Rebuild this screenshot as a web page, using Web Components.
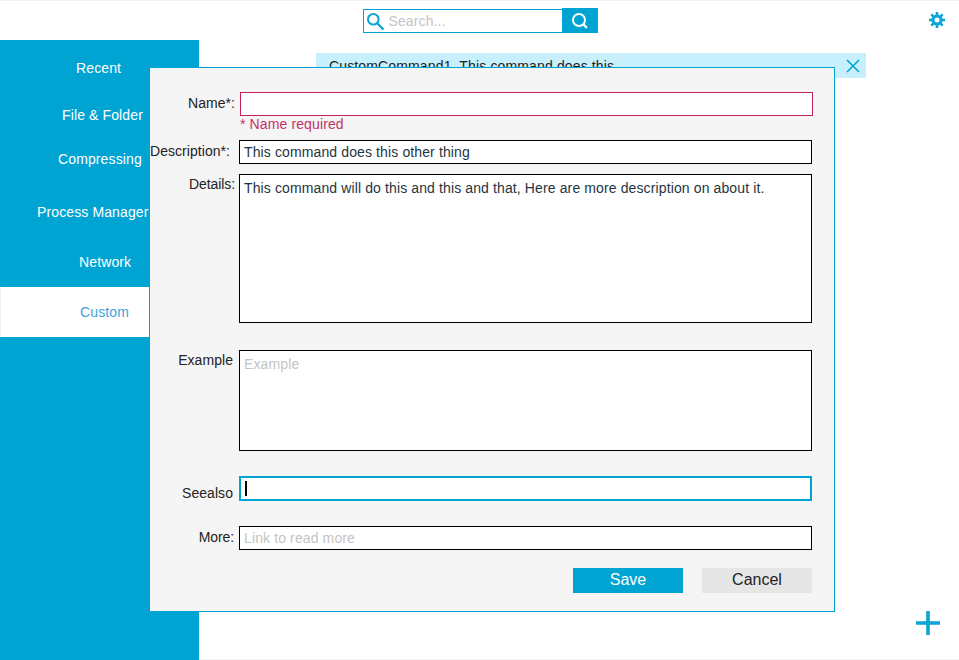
<!DOCTYPE html>
<html lang="en"><head><meta charset="utf-8"><title>Commands</title>
<style>
html,body{margin:0;padding:0;background:#fff;height:100%}
body{font:14px "Liberation Sans",Arial,sans-serif;color:#222;overflow:hidden}
</style></head><body>
<app-shell>
  <search-box slot="top"></search-box>
  <side-nav slot="nav">
    <nav-item style="--h:56px;--x:76px">Recent</nav-item>
    <nav-item style="--h:38px;--x:62px">File &amp; Folder</nav-item>
    <nav-item style="--h:50px;--x:58px">Compressing</nav-item>
    <nav-item style="--h:56px;--x:37px">Process Manager</nav-item>
    <nav-item style="--h:47px;--x:79px;--pb:4px">Network</nav-item>
    <nav-item active style="--h:50px;--x:80px">Custom</nav-item>
  </side-nav>
  <command-banner slot="content">CustomCommand1&nbsp; This command does this</command-banner>
  <command-dialog slot="overlay">
    <form-row label="Name*:" style="--top:24px;--end:4px;--ly:3px">
      <text-field state="error" style="--fh:24px"></text-field>
      <div slot="note" style="color:#c2336a;font-size:14px;letter-spacing:.12px;line-height:16px;margin-left:1px;height:16px">* Name required</div>
    </form-row>
    <form-row label="Description*:" style="--top:8px;--end:9px;--ly:3px">
      <text-field value="This command does this other thing" style="--fh:24px"></text-field>
    </form-row>
    <form-row label="Details:" style="--top:10px;--end:4px;--ly:2px;--ls:-.08px">
      <text-field multiline value="This command will do this and this and that, Here are more description on about it." style="--fh:149px"></text-field>
    </form-row>
    <form-row label="Example" style="--top:27px;--end:6px;--ly:2px">
      <text-field multiline placeholder="Example" style="--fh:101px"></text-field>
    </form-row>
    <form-row label="Seealso" style="--top:25px;--end:6px;--ly:9px">
      <text-field state="focus" style="--fh:25px"></text-field>
    </form-row>
    <form-row label="More:" style="--top:25px;--end:5px;--ly:3px;--ls:-.1px">
      <text-field placeholder="Link to read more" style="--fh:24px"></text-field>
    </form-row>
    <div slot="actions"><action-button primary>Save</action-button><action-button>Cancel</action-button></div>
  </command-dialog>
  <settings-gear slot="gear"></settings-gear>
  <add-button slot="add"></add-button>
</app-shell>
<script>
function def(name, html, init){
  customElements.define(name, class extends HTMLElement{
    constructor(){super();this.attachShadow({mode:'open'}).innerHTML=html;}
    connectedCallback(){ if(init) init(this); }
  });
}
def('app-shell',`<style>
:host{display:block;position:relative;width:959px;height:660px;box-sizing:border-box;border-top:1px solid #f1f1f1;overflow:hidden;background:#fff}
.top{height:39px;display:flex;justify-content:center;padding-left:1px;box-sizing:border-box}
.main{display:flex;height:620px}
.nav{width:199px;flex:none}
.content{flex:1;padding:13px 93px 0 117px;box-sizing:border-box;min-width:0;border-bottom:1px solid #f1f1f1}
.ov{position:absolute;left:149px;top:66px}
.gear{position:absolute;left:929px;top:11px}
.add{position:absolute;left:916px;top:610px}
</style>
<div class="top"><slot name="top"></slot></div>
<div class="main"><div class="nav"><slot name="nav"></slot></div><div class="content"><slot name="content"></slot></div></div>
<div class="ov"><slot name="overlay"></slot></div>
<div class="gear"><slot name="gear"></slot></div>
<div class="add"><slot name="add"></slot></div>`);
def('search-box',`<style>
:host{display:flex;align-items:flex-start;padding-top:8px;height:25px;font-size:14px}
.b{width:200px;height:24px;box-sizing:border-box;border:1px solid #00a4d3;border-right:0;display:flex;align-items:center;padding-left:3px;color:#c4c4c4;background:#fff;gap:4px;letter-spacing:.12px}
.g{width:36px;height:25px;margin-top:-1px;margin-left:-1px;background:#00a4d3;display:flex;align-items:center;justify-content:center}
svg{display:block}
</style>
<div class="b"><svg width="18" height="18" viewBox="0 0 18 18" fill="none" stroke="#0aa5d5"><circle cx="6.3" cy="7.3" r="5.3" stroke-width="2"/><path d="M10 11l6.5 6.5" stroke-width="2.4"/></svg><span>Search...</span></div>
<div class="g"><svg width="18" height="18" viewBox="0 0 18 18" fill="none" stroke="#fff"><circle cx="8" cy="8" r="6" stroke-width="2"/><path d="M12.3 12.3l3.6 3.6" stroke-width="2.2"/></svg></div>`);
def('side-nav',`<style>:host{display:block;background:#00a4d3;height:100%}</style><slot></slot>`);
def('nav-item',`<style>
:host{display:flex;align-items:center;height:var(--h);padding-left:var(--x);padding-bottom:var(--pb,0);box-sizing:border-box;color:#fff;font-size:14px;letter-spacing:.12px;white-space:nowrap}
:host([active]){background:#fff;color:#3ea3dc;border-left:1px solid #f1f1f1;padding-left:calc(var(--x) - 1px)}
</style><slot></slot>`);
def('command-banner',`<style>
:host{display:flex;align-items:center;justify-content:space-between;height:25px;background:#c8effc;padding:0 6px 0 13px;box-sizing:border-box;color:#222;font-size:14px;letter-spacing:.14px}
svg{display:block}
</style><span><slot></slot></span><svg width="15" height="15" viewBox="0 0 15 15" stroke="#0aa5d5" stroke-width="1.7" fill="none"><path d="M2 2l12 12M14 2l-12 12"/></svg>`);
def('command-dialog',`<style>
:host{display:block;width:686px;height:545px;box-sizing:border-box;border:1px solid #00a4d3;background:#f5f5f5}
.a{margin:18px 0 0 0}
</style><slot></slot><div class="a"><slot name="actions"></slot></div>`);
def('form-row',`<style>
:host{display:grid;grid-template-columns:89px 573px;margin-top:var(--top)}
.l{text-align:right;padding-right:var(--end);padding-top:var(--ly);font-size:14px;letter-spacing:var(--ls,.05px);line-height:16px;color:#222;white-space:nowrap}
</style><div class="l"></div><div><slot></slot><slot name="note"></slot></div>`, el=>{el.shadowRoot.querySelector('.l').textContent=el.getAttribute('label');});
def('text-field',`<style>
:host{display:block;height:var(--fh);box-sizing:border-box;border:1px solid #000;background:#fff;padding:3px 4px;font-size:14px;letter-spacing:.12px;line-height:16px;color:#1f3540}
:host([multiline]){padding-top:5px}
:host([state=error]){border-color:#c7215d;margin-left:1px;margin-right:-1px}
:host([state=focus]){border:2px solid #00a4d3;padding:3px 4px}
.p{color:#c4c4c4}
.c{display:block;width:2px;height:15px;background:#000}
</style><span class="t"></span>`, el=>{
  const t=el.shadowRoot.querySelector('.t');
  if(el.getAttribute('state')==='focus'){t.className='c';return;}
  const v=el.getAttribute('value'),p=el.getAttribute('placeholder');
  if(v)t.textContent=v; else if(p){t.textContent=p;t.className='p';}
});
def('action-button',`<style>
:host{display:inline-flex;align-items:center;justify-content:center;width:110px;height:25px;box-sizing:border-box;padding-bottom:2px;background:#e6e6e6;color:#222;font-size:16px;vertical-align:top}
:host([primary]){background:#00a4d3;color:#fff;margin-left:423px;margin-right:19px}
</style><slot></slot>`);
def('settings-gear',`<style>:host{display:block}svg{display:block}</style>
<svg width="16" height="16" viewBox="0 0 16 16"><g fill="#0aa5d5"><rect x="6.7" y="0" width="2.6" height="16"/><rect x="0" y="6.7" width="16" height="2.6"/><rect x="6.7" y="0" width="2.6" height="16" transform="rotate(45 8 8)"/><rect x="6.7" y="0" width="2.6" height="16" transform="rotate(-45 8 8)"/><circle cx="8" cy="8" r="5.6"/></g><circle cx="8" cy="8" r="2.5" fill="#fff"/></svg>`);
def('add-button',`<style>:host{display:block}svg{display:block}</style>
<svg width="24" height="24" viewBox="0 0 24 24" fill="#0aa5d5"><path d="M10.2 0h3.6v10.2H24v3.6H13.8V24h-3.6V13.8H0v-3.6h10.2z"/></svg>`);
</script>
</body></html>
